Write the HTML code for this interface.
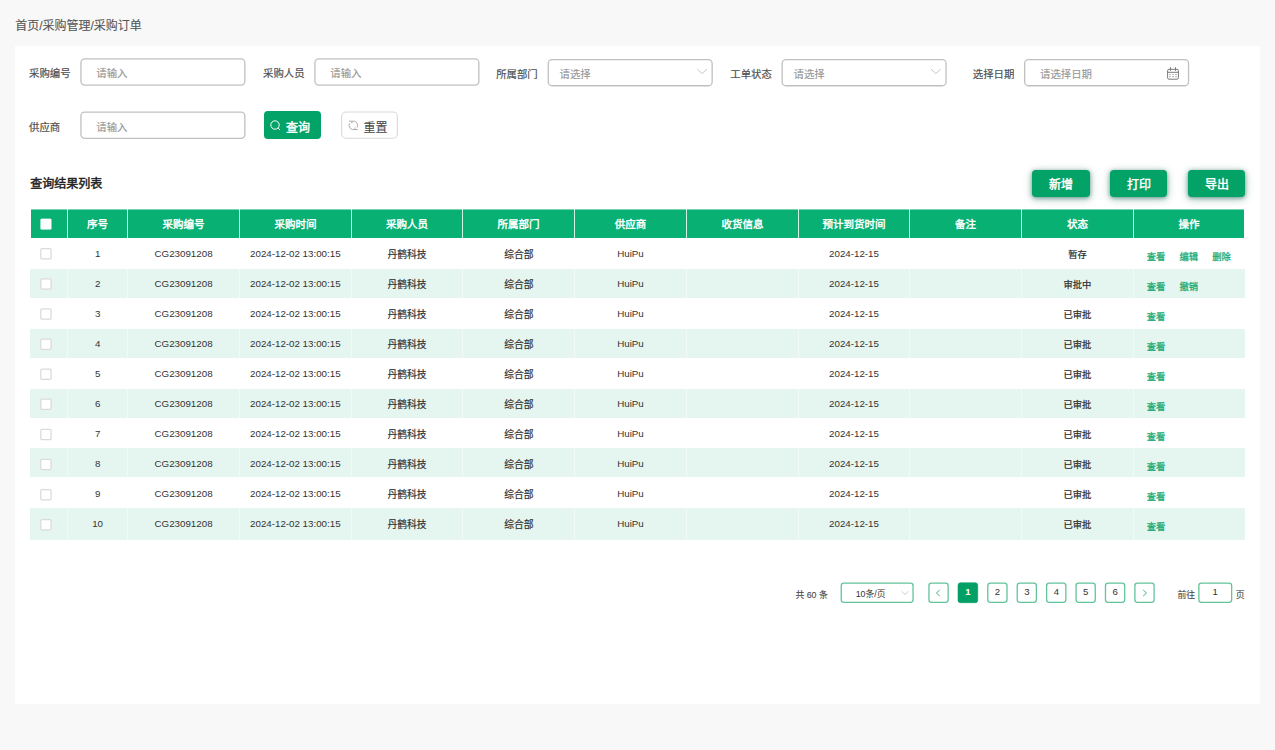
<!DOCTYPE html><html lang="zh-CN"><head><meta charset="utf-8"><title>采购订单</title><style>
*{box-sizing:border-box;margin:0;padding:0}
html,body{width:1275px;height:750px;overflow:hidden}
body{background:#f8f8f8;font-family:"Liberation Sans","Noto Sans CJK SC",sans-serif;color:#333;position:relative;font-size:10.4px}
.abs{position:absolute}
svg{position:absolute;overflow:visible}
.crumb{left:15.2px;top:17px;font-size:12px;line-height:18px;color:#555;-webkit-text-stroke:0.1px currentColor}
.panel{left:15px;top:46px;width:1245px;height:658px;background:#fff}
.lbl{font-size:10.4px;line-height:31px;height:27px;color:#505050;-webkit-text-stroke:0.18px currentColor;white-space:nowrap}
.inp{height:27px;width:165px;font-size:10.4px;line-height:31.6px;color:#959595;-webkit-text-stroke:0.1px currentColor;padding-left:16px;white-space:nowrap}
.sel{padding-left:12px}
.btn{height:27px;border-radius:3.8px;font-size:12px;line-height:29px;text-align:center;-webkit-text-stroke:0.42px currentColor;white-space:nowrap}
.btn.g{background:#03a267;color:#fff}
.btn.w{color:#444;-webkit-text-stroke:0.05px currentColor}
.btn.sh{line-height:30px;box-shadow:0 1px 4px rgba(0,80,65,.5),0 2px 10px rgba(0,100,80,.3)}
.title{left:30.3px;top:174.5px;font-size:12px;line-height:18px;-webkit-text-stroke:0.45px currentColor;color:#222}
.th{top:209px;height:29px;background:#08b074;color:#fff;-webkit-text-stroke:0.4px currentColor;font-size:10.5px;line-height:31px;text-align:center}
.row{left:30px;width:1215px;height:30px}
.stripe{left:0;width:1215px;background:#e5f6f0}
.vl{top:0;width:1px;height:100%;background:rgba(255,255,255,.45)}
.td{top:0;height:30px;line-height:30px;text-align:center;font-size:9.75px;color:#333;white-space:nowrap}
.td.cjk{color:#333;line-height:32px;-webkit-text-stroke:0.2px currentColor}
.td.st{line-height:32px;font-size:9.3px;-webkit-text-stroke:0.22px currentColor;color:#2e2e2e}
.op{color:#1aab76;-webkit-text-stroke:0.27px currentColor;font-size:9.3px;top:0;line-height:37px;height:30px}
.pg{top:582px;height:21px;width:21px;font-size:9.6px;line-height:20px;text-align:center;color:#333}
.pg.on{color:#fff;font-weight:bold}
.pt{top:582px;height:21px;line-height:26px;font-size:8.85px;color:#4a4a4a;-webkit-text-stroke:0.1px currentColor;white-space:nowrap}
</style></head><body>
<div class="abs crumb">首页/采购管理/采购订单</div>
<div class="abs panel"></div>
<div class="abs lbl" style="left:29px;top:58.2px">采购编号</div>
<svg style="left:0;top:0" width="1" height="1"><rect x="80.95" y="58.85" width="163.90" height="26.20" rx="3.8" fill="#fff" stroke="#c0c0c0" stroke-width="1.3"/></svg>
<div class="abs inp " style="left:80.3px;top:58.2px">请输入</div>
<div class="abs lbl" style="left:263px;top:58.2px">采购人员</div>
<svg style="left:0;top:0" width="1" height="1"><rect x="314.95" y="58.85" width="163.90" height="26.20" rx="3.8" fill="#fff" stroke="#c0c0c0" stroke-width="1.3"/></svg>
<div class="abs inp " style="left:314.3px;top:58.2px">请输入</div>
<div class="abs lbl" style="left:496.2px;top:59.2px">所属部门</div>
<svg style="left:0;top:0" width="1" height="1"><rect x="548.25" y="59.65" width="163.90" height="26.10" rx="3.8" fill="#fff" stroke="#c0c0c0" stroke-width="1.3"/></svg>
<div class="abs inp sel" style="left:547.6px;top:59.0px">请选择</div><svg style="left:0;top:0" width="1" height="1"><path d="M697.3 69.2 l4.8 4.4 l4.8 -4.4" fill="none" stroke="#c6c6c6" stroke-width="1"/></svg>
<div class="abs lbl" style="left:730.3px;top:59.2px">工单状态</div>
<svg style="left:0;top:0" width="1" height="1"><rect x="782.15" y="59.65" width="163.90" height="26.10" rx="3.8" fill="#fff" stroke="#c0c0c0" stroke-width="1.3"/></svg>
<div class="abs inp sel" style="left:781.5px;top:59.0px">请选择</div><svg style="left:0;top:0" width="1" height="1"><path d="M931.0 69.2 l4.8 4.4 l4.8 -4.4" fill="none" stroke="#c6c6c6" stroke-width="1"/></svg>
<div class="abs lbl" style="left:972.8px;top:59.2px">选择日期</div>
<svg style="left:0;top:0" width="1" height="1"><rect x="1024.65" y="59.65" width="163.90" height="26.10" rx="3.8" fill="#fff" stroke="#c0c0c0" stroke-width="1.3"/></svg>
<div class="abs inp " style="left:1024px;top:59.0px">请选择日期</div><svg style="left:1167px;top:67px" width="12" height="13" viewBox="0 0 12 13"><rect x="0.6" y="2.3" width="10.8" height="9.9" rx="1.4" fill="none" stroke="#7a7a7a" stroke-width="1"/><path d="M0.6 5.3 H11.4 M3.5 0.2 V3.8 M8.5 0.2 V3.8" stroke="#7a7a7a" stroke-width="1" fill="none"/><path d="M2.4 7.6h1.3M5.4 7.6h1.3M8.4 7.6h1.3M2.4 9.7h1.3M5.4 9.7h1.3M8.4 9.7h1.3" stroke="#7a7a7a" stroke-width="0.8"/></svg>
<div class="abs lbl" style="left:29px;top:111.5px">供应商</div>
<svg style="left:0;top:0" width="1" height="1"><rect x="80.95" y="112.15" width="163.90" height="26.20" rx="3.8" fill="#fff" stroke="#c0c0c0" stroke-width="1.3"/></svg>
<div class="abs inp " style="left:80.3px;top:111.5px">请输入</div>
<div class="abs btn g" style="left:264px;top:111px;width:57px;height:28px;padding-left:11px;line-height:35px"><svg style="left:6.2px;top:9.1px" width="11" height="11" viewBox="0 0 11 11"><circle cx="5" cy="5" r="4.2" fill="none" stroke="#fff" stroke-width="1"/><path d="M8.1 8.1 L10 10" stroke="#fff" stroke-width="1"/></svg>查询</div>
<svg style="left:0;top:0" width="1" height="1"><rect x="341.65" y="112.05" width="55.70" height="26.20" rx="4.5" fill="#fff" stroke="#d9d9d9" stroke-width="1.1"/></svg>
<div class="abs btn w" style="left:341px;top:111px;width:57px;height:28px;padding-left:12px;line-height:35px"><svg style="left:6.6px;top:9.3px" width="11" height="11" viewBox="0 0 11 11" fill="none" stroke="#a4a4a4" stroke-width="0.9"><path d="M1.68 3.25 A4.3 4.3 0 0 0 6.87 9.44"/><path d="M9.12 7.55 A4.3 4.3 0 0 0 3.93 1.36"/><path d="M1 1.2 h2.9 v2.2"/><path d="M9.8 9.6 h-2.9 v-2.2"/></svg>重置</div>
<div class="abs title">查询结果列表</div>
<div class="abs btn g sh" style="left:1032px;top:170px;width:58px;padding-left:0px">新增</div>
<div class="abs btn g sh" style="left:1110px;top:170px;width:57px;padding-left:1px">打印</div>
<div class="abs btn g sh" style="left:1188px;top:170px;width:57px;padding-left:1px">导出</div>
<div class="abs" style="left:31px;top:209px;width:1213px;height:29px;background:#d3f1e5"></div>
<div class="abs" style="left:31px;top:209px;width:1213px;height:1px;background:rgba(255,255,255,.45);z-index:2"></div>
<div class="abs th" style="left:31px;width:36px"><svg style="left:0;top:0" width="1" height="1"><rect x="9.50" y="9.70" width="10.90" height="10.70" rx="1.2" fill="#fff" stroke="#fff" stroke-width="0.2"/></svg></div>
<div class="abs th" style="left:68px;width:59px">序号</div>
<div class="abs th" style="left:128px;width:111px">采购编号</div>
<div class="abs th" style="left:240px;width:111px">采购时间</div>
<div class="abs th" style="left:352px;width:110px">采购人员</div>
<div class="abs th" style="left:463px;width:111px">所属部门</div>
<div class="abs th" style="left:575px;width:111px">供应商</div>
<div class="abs th" style="left:687px;width:111px">收货信息</div>
<div class="abs th" style="left:799px;width:110px">预计到货时间</div>
<div class="abs th" style="left:910px;width:111px">备注</div>
<div class="abs th" style="left:1022px;width:111px">状态</div>
<div class="abs th" style="left:1134px;width:110px">操作</div>
<div class="abs row" style="top:239px">
<svg style="left:0;top:0" width="1" height="1"><rect x="10.82" y="9.72" width="10.25" height="10.25" rx="1" fill="#fff" stroke="#dadada" stroke-width="1.25"/></svg>
<div class="abs td" style="left:37.50px;width:60.20px">1</div>
<div class="abs td" style="left:97.70px;width:111.74px">CG23091208</div>
<div class="abs td" style="left:209.44px;width:111.74px">2024-12-02 13:00:15</div>
<div class="abs td cjk" style="left:321.18px;width:111.74px">丹鹤科技</div>
<div class="abs td cjk" style="left:432.92px;width:111.74px">综合部</div>
<div class="abs td" style="left:544.66px;width:111.74px">HuiPu</div>
<div class="abs td" style="left:768.14px;width:111.74px">2024-12-15</div>
<div class="abs td st" style="left:991.62px;width:111.74px">暂存</div>
<div class="abs op" style="left:1116.7px">查看</div>
<div class="abs op" style="left:1149.5px">编辑</div>
<div class="abs op" style="left:1182.3px">删除</div>
</div>
<div class="abs row" style="top:269px">
<div class="abs stripe" style="top:0px;height:29px">
<div class="abs vl" style="left:37px"></div>
<div class="abs vl" style="left:97px"></div>
<div class="abs vl" style="left:209px"></div>
<div class="abs vl" style="left:321px"></div>
<div class="abs vl" style="left:432px"></div>
<div class="abs vl" style="left:544px"></div>
<div class="abs vl" style="left:656px"></div>
<div class="abs vl" style="left:768px"></div>
<div class="abs vl" style="left:879px"></div>
<div class="abs vl" style="left:991px"></div>
<div class="abs vl" style="left:1103px"></div>
</div>
<svg style="left:0;top:0" width="1" height="1"><rect x="10.82" y="9.82" width="10.25" height="10.25" rx="1" fill="#fff" stroke="#dadada" stroke-width="1.25"/></svg>
<div class="abs td" style="left:37.50px;width:60.20px">2</div>
<div class="abs td" style="left:97.70px;width:111.74px">CG23091208</div>
<div class="abs td" style="left:209.44px;width:111.74px">2024-12-02 13:00:15</div>
<div class="abs td cjk" style="left:321.18px;width:111.74px">丹鹤科技</div>
<div class="abs td cjk" style="left:432.92px;width:111.74px">综合部</div>
<div class="abs td" style="left:544.66px;width:111.74px">HuiPu</div>
<div class="abs td" style="left:768.14px;width:111.74px">2024-12-15</div>
<div class="abs td st" style="left:991.62px;width:111.74px">审批中</div>
<div class="abs op" style="left:1116.7px">查看</div>
<div class="abs op" style="left:1149.5px">撤销</div>
</div>
<div class="abs row" style="top:299px">
<svg style="left:0;top:0" width="1" height="1"><rect x="10.82" y="9.92" width="10.25" height="10.25" rx="1" fill="#fff" stroke="#dadada" stroke-width="1.25"/></svg>
<div class="abs td" style="left:37.50px;width:60.20px">3</div>
<div class="abs td" style="left:97.70px;width:111.74px">CG23091208</div>
<div class="abs td" style="left:209.44px;width:111.74px">2024-12-02 13:00:15</div>
<div class="abs td cjk" style="left:321.18px;width:111.74px">丹鹤科技</div>
<div class="abs td cjk" style="left:432.92px;width:111.74px">综合部</div>
<div class="abs td" style="left:544.66px;width:111.74px">HuiPu</div>
<div class="abs td" style="left:768.14px;width:111.74px">2024-12-15</div>
<div class="abs td st" style="left:991.62px;width:111.74px">已审批</div>
<div class="abs op" style="left:1116.7px">查看</div>
</div>
<div class="abs row" style="top:329px">
<div class="abs stripe" style="top:0px;height:29px">
<div class="abs vl" style="left:37px"></div>
<div class="abs vl" style="left:97px"></div>
<div class="abs vl" style="left:209px"></div>
<div class="abs vl" style="left:321px"></div>
<div class="abs vl" style="left:432px"></div>
<div class="abs vl" style="left:544px"></div>
<div class="abs vl" style="left:656px"></div>
<div class="abs vl" style="left:768px"></div>
<div class="abs vl" style="left:879px"></div>
<div class="abs vl" style="left:991px"></div>
<div class="abs vl" style="left:1103px"></div>
</div>
<svg style="left:0;top:0" width="1" height="1"><rect x="10.82" y="10.03" width="10.25" height="10.25" rx="1" fill="#fff" stroke="#dadada" stroke-width="1.25"/></svg>
<div class="abs td" style="left:37.50px;width:60.20px">4</div>
<div class="abs td" style="left:97.70px;width:111.74px">CG23091208</div>
<div class="abs td" style="left:209.44px;width:111.74px">2024-12-02 13:00:15</div>
<div class="abs td cjk" style="left:321.18px;width:111.74px">丹鹤科技</div>
<div class="abs td cjk" style="left:432.92px;width:111.74px">综合部</div>
<div class="abs td" style="left:544.66px;width:111.74px">HuiPu</div>
<div class="abs td" style="left:768.14px;width:111.74px">2024-12-15</div>
<div class="abs td st" style="left:991.62px;width:111.74px">已审批</div>
<div class="abs op" style="left:1116.7px">查看</div>
</div>
<div class="abs row" style="top:359px">
<svg style="left:0;top:0" width="1" height="1"><rect x="10.82" y="10.12" width="10.25" height="10.25" rx="1" fill="#fff" stroke="#dadada" stroke-width="1.25"/></svg>
<div class="abs td" style="left:37.50px;width:60.20px">5</div>
<div class="abs td" style="left:97.70px;width:111.74px">CG23091208</div>
<div class="abs td" style="left:209.44px;width:111.74px">2024-12-02 13:00:15</div>
<div class="abs td cjk" style="left:321.18px;width:111.74px">丹鹤科技</div>
<div class="abs td cjk" style="left:432.92px;width:111.74px">综合部</div>
<div class="abs td" style="left:544.66px;width:111.74px">HuiPu</div>
<div class="abs td" style="left:768.14px;width:111.74px">2024-12-15</div>
<div class="abs td st" style="left:991.62px;width:111.74px">已审批</div>
<div class="abs op" style="left:1116.7px">查看</div>
</div>
<div class="abs row" style="top:389px">
<div class="abs stripe" style="top:0px;height:29px">
<div class="abs vl" style="left:37px"></div>
<div class="abs vl" style="left:97px"></div>
<div class="abs vl" style="left:209px"></div>
<div class="abs vl" style="left:321px"></div>
<div class="abs vl" style="left:432px"></div>
<div class="abs vl" style="left:544px"></div>
<div class="abs vl" style="left:656px"></div>
<div class="abs vl" style="left:768px"></div>
<div class="abs vl" style="left:879px"></div>
<div class="abs vl" style="left:991px"></div>
<div class="abs vl" style="left:1103px"></div>
</div>
<svg style="left:0;top:0" width="1" height="1"><rect x="10.82" y="10.22" width="10.25" height="10.25" rx="1" fill="#fff" stroke="#dadada" stroke-width="1.25"/></svg>
<div class="abs td" style="left:37.50px;width:60.20px">6</div>
<div class="abs td" style="left:97.70px;width:111.74px">CG23091208</div>
<div class="abs td" style="left:209.44px;width:111.74px">2024-12-02 13:00:15</div>
<div class="abs td cjk" style="left:321.18px;width:111.74px">丹鹤科技</div>
<div class="abs td cjk" style="left:432.92px;width:111.74px">综合部</div>
<div class="abs td" style="left:544.66px;width:111.74px">HuiPu</div>
<div class="abs td" style="left:768.14px;width:111.74px">2024-12-15</div>
<div class="abs td st" style="left:991.62px;width:111.74px">已审批</div>
<div class="abs op" style="left:1116.7px">查看</div>
</div>
<div class="abs row" style="top:419px">
<svg style="left:0;top:0" width="1" height="1"><rect x="10.82" y="10.32" width="10.25" height="10.25" rx="1" fill="#fff" stroke="#dadada" stroke-width="1.25"/></svg>
<div class="abs td" style="left:37.50px;width:60.20px">7</div>
<div class="abs td" style="left:97.70px;width:111.74px">CG23091208</div>
<div class="abs td" style="left:209.44px;width:111.74px">2024-12-02 13:00:15</div>
<div class="abs td cjk" style="left:321.18px;width:111.74px">丹鹤科技</div>
<div class="abs td cjk" style="left:432.92px;width:111.74px">综合部</div>
<div class="abs td" style="left:544.66px;width:111.74px">HuiPu</div>
<div class="abs td" style="left:768.14px;width:111.74px">2024-12-15</div>
<div class="abs td st" style="left:991.62px;width:111.74px">已审批</div>
<div class="abs op" style="left:1116.7px">查看</div>
</div>
<div class="abs row" style="top:449px">
<div class="abs stripe" style="top:-1px;height:29px">
<div class="abs vl" style="left:37px"></div>
<div class="abs vl" style="left:97px"></div>
<div class="abs vl" style="left:209px"></div>
<div class="abs vl" style="left:321px"></div>
<div class="abs vl" style="left:432px"></div>
<div class="abs vl" style="left:544px"></div>
<div class="abs vl" style="left:656px"></div>
<div class="abs vl" style="left:768px"></div>
<div class="abs vl" style="left:879px"></div>
<div class="abs vl" style="left:991px"></div>
<div class="abs vl" style="left:1103px"></div>
</div>
<svg style="left:0;top:0" width="1" height="1"><rect x="10.82" y="10.42" width="10.25" height="10.25" rx="1" fill="#fff" stroke="#dadada" stroke-width="1.25"/></svg>
<div class="abs td" style="left:37.50px;width:60.20px">8</div>
<div class="abs td" style="left:97.70px;width:111.74px">CG23091208</div>
<div class="abs td" style="left:209.44px;width:111.74px">2024-12-02 13:00:15</div>
<div class="abs td cjk" style="left:321.18px;width:111.74px">丹鹤科技</div>
<div class="abs td cjk" style="left:432.92px;width:111.74px">综合部</div>
<div class="abs td" style="left:544.66px;width:111.74px">HuiPu</div>
<div class="abs td" style="left:768.14px;width:111.74px">2024-12-15</div>
<div class="abs td st" style="left:991.62px;width:111.74px">已审批</div>
<div class="abs op" style="left:1116.7px">查看</div>
</div>
<div class="abs row" style="top:479px">
<svg style="left:0;top:0" width="1" height="1"><rect x="10.82" y="10.53" width="10.25" height="10.25" rx="1" fill="#fff" stroke="#dadada" stroke-width="1.25"/></svg>
<div class="abs td" style="left:37.50px;width:60.20px">9</div>
<div class="abs td" style="left:97.70px;width:111.74px">CG23091208</div>
<div class="abs td" style="left:209.44px;width:111.74px">2024-12-02 13:00:15</div>
<div class="abs td cjk" style="left:321.18px;width:111.74px">丹鹤科技</div>
<div class="abs td cjk" style="left:432.92px;width:111.74px">综合部</div>
<div class="abs td" style="left:544.66px;width:111.74px">HuiPu</div>
<div class="abs td" style="left:768.14px;width:111.74px">2024-12-15</div>
<div class="abs td st" style="left:991.62px;width:111.74px">已审批</div>
<div class="abs op" style="left:1116.7px">查看</div>
</div>
<div class="abs row" style="top:509px">
<div class="abs stripe" style="top:-1px;height:32px">
<div class="abs vl" style="left:37px"></div>
<div class="abs vl" style="left:97px"></div>
<div class="abs vl" style="left:209px"></div>
<div class="abs vl" style="left:321px"></div>
<div class="abs vl" style="left:432px"></div>
<div class="abs vl" style="left:544px"></div>
<div class="abs vl" style="left:656px"></div>
<div class="abs vl" style="left:768px"></div>
<div class="abs vl" style="left:879px"></div>
<div class="abs vl" style="left:991px"></div>
<div class="abs vl" style="left:1103px"></div>
</div>
<svg style="left:0;top:0" width="1" height="1"><rect x="10.82" y="10.62" width="10.25" height="10.25" rx="1" fill="#fff" stroke="#dadada" stroke-width="1.25"/></svg>
<div class="abs td" style="left:37.50px;width:60.20px">10</div>
<div class="abs td" style="left:97.70px;width:111.74px">CG23091208</div>
<div class="abs td" style="left:209.44px;width:111.74px">2024-12-02 13:00:15</div>
<div class="abs td cjk" style="left:321.18px;width:111.74px">丹鹤科技</div>
<div class="abs td cjk" style="left:432.92px;width:111.74px">综合部</div>
<div class="abs td" style="left:544.66px;width:111.74px">HuiPu</div>
<div class="abs td" style="left:768.14px;width:111.74px">2024-12-15</div>
<div class="abs td st" style="left:991.62px;width:111.74px">已审批</div>
<div class="abs op" style="left:1116.7px">查看</div>
</div>
<div class="abs pt" style="left:795.4px">共 60 条</div>
<svg style="left:0;top:0" width="1" height="1"><rect x="841.25" y="583.15" width="71.80" height="19.20" rx="2.5" fill="#fff" stroke="#62c49b" stroke-width="1.3"/></svg>
<div class="abs pg" style="left:841px;width:73px;text-align:left;padding-left:14.7px;font-size:8.8px;line-height:25px">10条/页</div>
<svg style="left:0;top:0" width="1" height="1"><path d="M901.5 591.2 l3.5 3.3 l3.5 -3.3" fill="none" stroke="#c8c8c8" stroke-width="0.9"/></svg>
<svg style="left:0;top:0" width="1" height="1"><rect x="928.95" y="583.15" width="19.20" height="19.20" rx="2.5" fill="#fff" stroke="#62c49b" stroke-width="1.3"/></svg>
<svg style="left:0;top:0" width="1" height="1"><path d="M939.7 590 l-3.3 3 l3.3 3" fill="none" stroke="#45b58a" stroke-width="1"/></svg>
<svg style="left:0;top:0" width="1" height="1"><rect x="958.02" y="582.80" width="19.70" height="19.90" rx="2.5" fill="#03a066" stroke="#03a066" stroke-width="0.6"/></svg>
<div class="abs pg on" style="left:957.5px">1</div>
<svg style="left:0;top:0" width="1" height="1"><rect x="987.79" y="583.15" width="19.20" height="19.20" rx="2.5" fill="#fff" stroke="#62c49b" stroke-width="1.3"/></svg>
<div class="abs pg" style="left:986.9px">2</div>
<svg style="left:0;top:0" width="1" height="1"><rect x="1017.21" y="583.15" width="19.20" height="19.20" rx="2.5" fill="#fff" stroke="#62c49b" stroke-width="1.3"/></svg>
<div class="abs pg" style="left:1016.4px">3</div>
<svg style="left:0;top:0" width="1" height="1"><rect x="1046.63" y="583.15" width="19.20" height="19.20" rx="2.5" fill="#fff" stroke="#62c49b" stroke-width="1.3"/></svg>
<div class="abs pg" style="left:1045.8px">4</div>
<svg style="left:0;top:0" width="1" height="1"><rect x="1076.05" y="583.15" width="19.20" height="19.20" rx="2.5" fill="#fff" stroke="#62c49b" stroke-width="1.3"/></svg>
<div class="abs pg" style="left:1075.2px">5</div>
<svg style="left:0;top:0" width="1" height="1"><rect x="1105.47" y="583.15" width="19.20" height="19.20" rx="2.5" fill="#fff" stroke="#62c49b" stroke-width="1.3"/></svg>
<div class="abs pg" style="left:1104.6px">6</div>
<svg style="left:0;top:0" width="1" height="1"><rect x="1134.89" y="583.15" width="19.20" height="19.20" rx="2.5" fill="#fff" stroke="#62c49b" stroke-width="1.3"/></svg>
<svg style="left:0;top:0" width="1" height="1"><path d="M1143.2 590 l3.3 3 l-3.3 3" fill="none" stroke="#45b58a" stroke-width="1"/></svg>
<div class="abs pt" style="left:1177.5px">前往</div>
<svg style="left:0;top:0" width="1" height="1"><rect x="1198.85" y="583.15" width="32.80" height="19.20" rx="2.5" fill="#fff" stroke="#62c49b" stroke-width="1.3"/></svg>
<div class="abs pg" style="left:1198.2px;width:34px">1</div>
<div class="abs pt" style="left:1235.8px">页</div>
</body></html>
